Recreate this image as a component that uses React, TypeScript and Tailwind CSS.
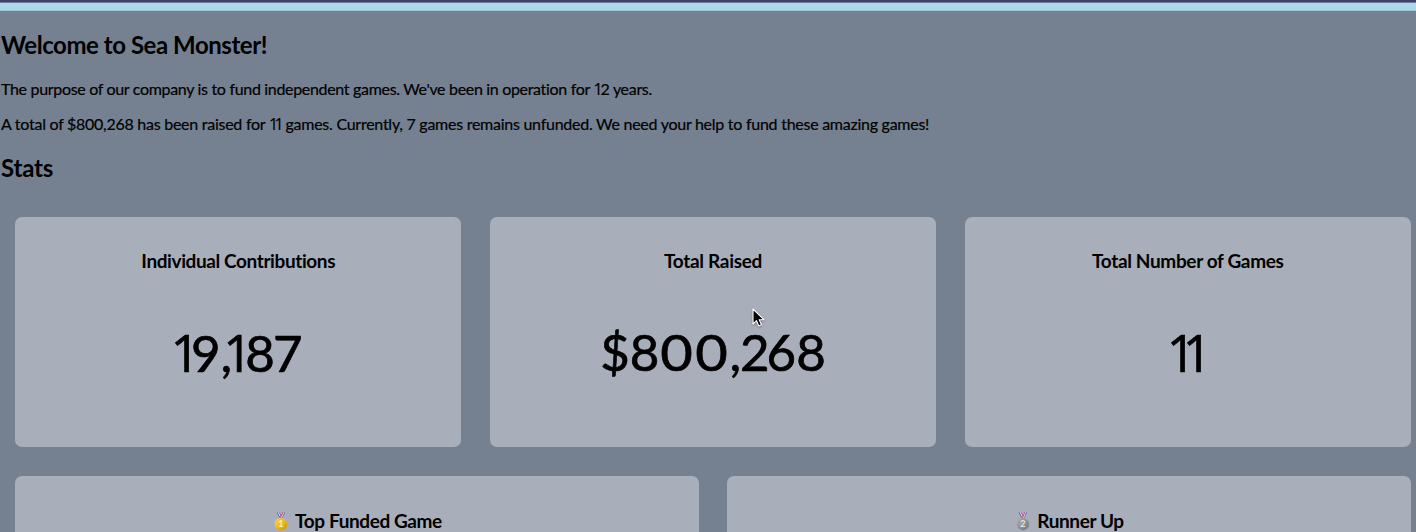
import { Fragment, type ReactNode } from "react";

function Medal({ rank, light, base, dark, ink }: { rank: string; light: string; base: string; dark: string; ink: string }) {
  const id = `medal-${rank}`;
  return (
    <svg className="h-[19px] w-[19px] shrink-0" viewBox="0 0 19 19" aria-hidden="true">
      <defs>
        <linearGradient id={id} x1="0" y1="0" x2="1" y2="1">
          <stop offset="0" stopColor={light} />
          <stop offset="0.55" stopColor={base} />
          <stop offset="1" stopColor={dark} />
        </linearGradient>
      </defs>
      <path d="M4.6 0.5h2.4l3 6H8z" fill="#4c62cf" />
      <path d="M5.8 0.5h1.4l2.6 5.4-1 .7z" fill="#f4edf2" />
      <path d="M6.9 0.5h1l2 4-.7 1.3z" fill="#e2474e" />
      <path d="M13.2 0.5h-2.6L7.9 6.5h2z" fill="#4c62cf" />
      <path d="M12 0.5h-1.5L8.2 6l1 .5z" fill="#e2474e" />
      <path d="M12.1 0.5h-.8L8.8 6.4h.7z" fill="#f4edf2" />
      <circle cx="8.9" cy="12.2" r="6.2" fill={`url(#${id})`} />
      <circle cx="8.9" cy="12.2" r="4.9" fill="none" stroke={dark} strokeOpacity="0.45" strokeWidth="0.5" />
      <text x="8.9" y="15.3" textAnchor="middle" fontSize="9" fontWeight="700" letterSpacing="0" fontFamily="Lato, sans-serif" fill={ink}>
        {rank}
      </text>
    </svg>
  );
}

function One({ className }: { className: string }) {
  return <span className={`font-['Open_Sans',sans-serif] ${className}`}>1</span>;
}

function WideZero() {
  return <span className="inline-block w-[35px] scale-x-[1.1] text-center">0</span>;
}

function StatCard({ title, titleClass, children }: { title: string; titleClass: string; children: ReactNode }) {
  return (
    <section className="flex h-[230px] flex-col items-center rounded-[7px] bg-[#a8afbb] pt-[32px]">
      <h3 className={`whitespace-nowrap text-[19px] leading-[24px] font-bold ${titleClass}`}>{title}</h3>
      <p className="mt-[47px] whitespace-nowrap text-[51px] leading-[64px] [-webkit-text-stroke:0.7px_black]">{children}</p>
    </section>
  );
}

export default function App() {
  return (
    <Fragment>
      <main className="h-[532px] w-full overflow-hidden bg-[#758190] font-[Lato,sans-serif] text-black">
        <div className="h-[3px] border-b border-[#6f7ba0] bg-[#3e4168]" />
        <div className="h-[8px] border-b border-[#9fc5d2] bg-[#add8e6]" />
        <div className="pl-px whitespace-nowrap">
          <h2 className="mt-[19px] text-[24px] leading-[30px] font-bold tracking-[-0.45px]">Welcome to Sea Monster!</h2>
          <p className="mt-[19px] text-[16px] leading-[20px] tracking-[-0.32px] [-webkit-text-stroke:0.2px_black]">
            The purpose of our company is to fund independent games. We've been in operation for <One className="tracking-[-2px]" />2 years.
          </p>
          <p className="mt-[15px] text-[16px] leading-[20px] tracking-[-0.26px] [-webkit-text-stroke:0.2px_black]">
            A total of $800,268 has been raised for <One className="tracking-[-3.5px]" /><One className="tracking-[-2px]" /> games. Currently, 7 games remains unfunded. We need your help to fund these amazing games!
          </p>
          <h2 className="mt-[19px] text-[24px] leading-[30px] font-bold tracking-[-0.2px]">Stats</h2>
        </div>
        <div className="mt-[34px] ml-[15px] mr-[5px] grid grid-cols-3 gap-[28.4px]">
          <StatCard title="Individual Contributions" titleClass="tracking-[-0.4px]">
            <One className="tracking-[-9px]" />9<span className="tracking-[-9px]">,</span><One className="tracking-[-7px]" /><span className="tracking-[-2px]">8</span><span className="tracking-[3px]">7</span>
          </StatCard>
          <StatCard title="Total Raised" titleClass="tracking-[-0.3px]">
            $8<WideZero /><WideZero /><span className="tracking-[-1px]">,</span><span className="tracking-[-3px]">2</span>68
          </StatCard>
          <StatCard title="Total Number of Games" titleClass="tracking-[-0.35px]">
            <One className="tracking-[-13px]" /><One className="tracking-[-3px]" />
          </StatCard>
        </div>
        <div className="mt-[29px] ml-[15px] mr-[5px] grid grid-cols-2 gap-[28px]">
          <section className="flex h-[230px] justify-center rounded-[7px] bg-[#a8afbb] pt-[33px]">
            <h3 className="flex h-[24px] items-center gap-[4px] whitespace-nowrap text-[19px] leading-[24px] font-bold tracking-[-0.4px]">
              <Medal rank="1" light="#ffdf55" base="#f2b91c" dark="#ca8b08" ink="#fff2a4" />
              Top Funded Game
            </h3>
          </section>
          <section className="flex h-[230px] justify-center rounded-[7px] bg-[#a8afbb] pt-[33px]">
            <h3 className="flex h-[24px] items-center gap-[4px] whitespace-nowrap text-[19px] leading-[24px] font-bold tracking-[-0.4px]">
              <Medal rank="2" light="#b5b5b5" base="#929292" dark="#737373" ink="#e4e4e4" />
              Runner Up
            </h3>
          </section>
        </div>
      </main>
      <svg className="absolute top-[307px] left-[751px] h-[23px] w-[16px] drop-shadow-[0_1px_1px_rgba(0,0,0,0.35)]" viewBox="0 0 16 23" aria-hidden="true">
        <path d="M2 2v15l3.5-3.3 2.3 5.3 2.7-1.2-2.3-5.1h4.7z" fill="#000" stroke="#fff" strokeWidth="1.1" strokeLinejoin="round" />
      </svg>
    </Fragment>
  );
}
